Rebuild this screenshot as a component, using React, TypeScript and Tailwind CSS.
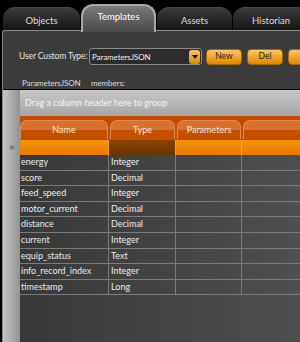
import React from 'react';

const rows = [
  ['energy', 'Integer'],
  ['score', 'Decimal'],
  ['feed_speed', 'Integer'],
  ['motor_current', 'Decimal'],
  ['distance', 'Decimal'],
  ['current', 'Integer'],
  ['equip_status', 'Text'],
  ['info_record_index', 'Integer'],
  ['timestamp', 'Long'],
];

function Tab({ label, active, w }: { label: string; active?: boolean; w: string }) {
  if (active) {
    return (
      <div
        className={`${w} relative z-10 -mb-[2px] h-[28px] shrink-0 rounded-t-[12px] border-2 border-b-0 border-[#a9a9a9] bg-gradient-to-b from-[#7a7a7a] to-[#4a4a4a] pt-[4px] text-center text-[9.5px] leading-[13px] text-white`}
      >
        {label}
      </div>
    );
  }
  return (
    <div
      className={`${w} h-[23px] shrink-0 rounded-t-[12px] border-t border-[#4a4a4a] bg-gradient-to-b from-[#3a3a3a] to-[#161616] pt-[6px] text-center text-[9.5px] leading-[13px] text-[#dcdcdc]`}
    >
      {label}
    </div>
  );
}

function OrangeButton({ label }: { label: string }) {
  return (
    <div className="flex h-[16px] w-[36px] shrink-0 items-center justify-center rounded-[4px] border border-[#a86a00] bg-gradient-to-b from-[#fbc866] via-[#f1a326] to-[#e18a00] text-[8.5px] text-[#202020]">
      {label}
    </div>
  );
}

export default function App() {
  return (
    <div className="flex h-[342px] w-[300px] flex-col overflow-hidden bg-black font-['Lato',sans-serif]">
      <div className="flex h-[30px] shrink-0 items-end gap-[1px] pl-[3px]">
        <Tab label="Objects" w="w-[77px]" />
        <Tab label="Templates" active w="w-[75px]" />
        <Tab label="Assets" w="w-[75px]" />
        <Tab label="Historian" w="w-[76px]" />
      </div>

      <div className="ml-[2px] flex min-h-0 flex-1 flex-col rounded-tl-[3px] border-l border-t border-[#8a8a8a] bg-[#3b3b3b]">
        <div className="mt-[17px] flex h-[17px] items-center pl-[16px]">
          <div className="w-[70px] shrink-0 whitespace-nowrap text-[8.5px] tracking-[-0.1px] text-[#e4e4e4]">User Custom Type:</div>
          <div className="flex h-[17px] w-[113px] shrink-0 items-center rounded-[3px] border border-[#8c8c8c] bg-[#2c2c2c] pl-[2px] pr-[1px]">
            <span className="flex-1 whitespace-nowrap text-[8px] tracking-[-0.1px] text-[#f0f0f0]">ParametersJSON</span>
            <div className="flex h-[14px] w-[11px] items-center justify-center rounded-[3px] bg-gradient-to-b from-[#fbc35a] to-[#e08800]">
              <svg width="6" height="4" viewBox="0 0 6 4">
                <path d="M0 0h6L3 4z" fill="#111" />
              </svg>
            </div>
          </div>
          <div className="ml-[4px] flex gap-[5px]">
            <OrangeButton label="New" />
            <OrangeButton label="Del" />
            <OrangeButton label="" />
          </div>
        </div>

        <div className="mt-[11px] flex h-[13px] items-center whitespace-nowrap pl-[19px] text-[8px] tracking-[-0.1px] text-[#dcdcdc]">
          <span className="w-[69px] shrink-0">ParametersJSON</span>
          <span>members:</span>
        </div>

        <div className="flex min-h-0 flex-1 border-t border-black">
          <div className="w-[17px] shrink-0 bg-gradient-to-r from-[#c6c6c6] to-[#929292]">
            <div className="h-[50px]" />
            <div className="flex h-[15px] items-center justify-center text-[7px] text-[#7a7a7a]">✱</div>
          </div>

          <div className="flex min-w-0 flex-1 flex-col bg-gradient-to-r from-[#383838] to-[#4f4f4f]">
            <div className="flex h-[26px] shrink-0 items-center bg-gradient-to-b from-[#c8c8c8] to-[#a6a6a6] pl-[5px] text-[9px] text-[#f6f6f6]">
              Drag a column header here to group
            </div>

            <div className="flex h-[24px] shrink-0 items-end gap-[2px] bg-[#c04c00] pb-[1px]">
              {['Name', 'Type', 'Parameters', ''].map((h, i) => (
                <div
                  key={i}
                  className={`${['w-[88px]', 'w-[65px]', 'w-[64px]', 'w-[80px]'][i]} flex h-[19px] shrink-0 items-center justify-center rounded-t-[7px] border border-b-0 border-[#e0895a] bg-gradient-to-b from-[#d8712f] from-50% to-[#c35000] to-50% text-[9px] text-[#f8e6d8]`}
                >
                  {h}
                </div>
              ))}
            </div>

            <div className="flex h-[15px] shrink-0 bg-gradient-to-b from-[#f59400] to-[#e97a00]">
              <div className="w-[89px] border-r border-[#f0a040]" />
              <div className="w-[67px] border-r border-[#f0a040] bg-gradient-to-b from-[#864400] to-[#6e3200]" />
              <div className="w-[66px] border-r border-[#f0a040]" />
              <div className="flex-1" />
            </div>

            {rows.map(([name, type]) => (
              <div key={name} className="flex h-[15.6px] shrink-0 border-b border-[#7b7b7b] text-[9px] leading-[14px] text-[#ececec]">
                <div className="w-[89px] border-r border-[#7b7b7b] pl-[1px]">{name}</div>
                <div className="w-[67px] border-r border-[#7b7b7b] pl-[2px]">{type}</div>
                <div className="w-[66px] border-r border-[#7b7b7b]" />
                <div className="flex-1" />
              </div>
            ))}
          </div>
        </div>
      </div>
    </div>
  );
}
